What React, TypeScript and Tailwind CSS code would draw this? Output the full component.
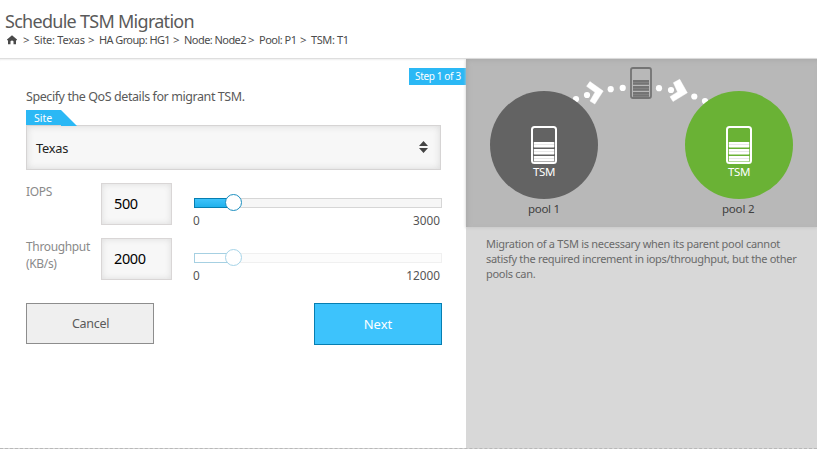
import type { ReactNode } from "react";

function ServerIcon({ x, y }: { x: number; y: number }) {
  return (
    <g transform={`translate(${x} ${y})`}>
      <rect x="1" y="1" width="24" height="36" rx="2.5" fill="none" stroke="#fff" strokeWidth="2" />
      {[16, 23, 30].map((top) => (
        <g key={top}>
          <rect x="2.8" y={top} width="20.5" height="5.4" rx="0.6" fill="#fff" />
          <rect x="2.8" y={top + 2} width="20.5" height="1" fill="#000" opacity="0.09" />
        </g>
      ))}
    </g>
  );
}

const dots = [
  [110, 40], [121, 36], [144.7, 30.2], [156.7, 28.9],
  [193, 29.2], [205, 31], [228.3, 37.5], [239, 42],
];

function MigrationDiagram() {
  return (
    <svg className="block h-[168px] w-[351px]" viewBox="0 0 351 168" fontFamily="'Noto Sans', 'Open Sans', sans-serif">
      {dots.map(([cx, cy]) => (
        <circle key={cx} cx={cx} cy={cy} r="3.1" fill="#fff" />
      ))}
      <g fill="#fff" stroke="#fff" strokeWidth="0.5">
        <path d="M123.9 22.6 137.2 32 128.8 45 124 42 129 33.3 120.6 27.3Z" />
        <path d="M213.7 20.3 221.3 33.8 207 42.5 204 37.7 211.6 33 207.4 23.7Z" />
      </g>
      <rect x="165" y="9" width="20" height="30" rx="2" fill="none" stroke="#747474" strokeWidth="1.8" />
      {[21, 27, 33].map((top) => (
        <g key={top}>
          <rect x="167" y={top} width="16" height="4.8" fill="#747474" />
          <rect x="167" y={top + 2} width="16" height="0.8" fill="#868686" />
        </g>
      ))}
      <circle cx="78" cy="86" r="54" fill="#636363" />
      <circle cx="273" cy="86" r="54" fill="#6ab235" />
      <ServerIcon x={65} y={67} />
      <ServerIcon x={260} y={67} />
      <g fontSize="11.5" fill="#fff">
        <text x="67" y="117" textLength="22.5">TSM</text>
        <text x="262" y="117" textLength="22.5">TSM</text>
      </g>
      <g fontSize="11.5" fill="#404040">
        <text x="62" y="154" textLength="32">pool 1</text>
        <text x="256" y="154" textLength="32.5">pool 2</text>
      </g>
    </svg>
  );
}

function ValueBox({ children }: { children: ReactNode }) {
  return (
    <div className="h-[42px] w-[71px] border border-[#d9d6d6] bg-[#f7f7f7] pl-3 text-[14.5px] leading-[39px] tracking-[-0.4px] text-black shadow-[inset_0_0_6px_#dcdcdc]">
      {children}
    </div>
  );
}

function Slider({ max, disabled }: { max: string; disabled?: boolean }) {
  return (
    <div className="w-[248px] pt-[15px]">
      <div className={`relative h-[10px] border ${disabled ? "border-[#f0f0f0] bg-[#fcfcfc]" : "border-[#d6d6d6] bg-[#f6f6f6]"}`}>
        <div className={`absolute -top-px -left-px h-[10px] w-10 border ${disabled ? "border-[#a6d0e2] bg-white" : "border-[#067eb1] bg-linear-to-b from-[#3dc3fb] to-[#1fb1ec]"}`} />
        <div className={`absolute -top-[5px] left-[30px] size-[17px] rounded-full border bg-white ${disabled ? "border-[#a6d4e8]" : "border-[#1d8fc0]"}`} />
      </div>
      <div className="mt-1 flex justify-between pr-[2px] text-[11.8px] leading-4 text-[#555]">
        <span className="-ml-px">0</span>
        <span>{max}</span>
      </div>
    </div>
  );
}

const crumbs = [
  { label: "Site: Texas", box: "w-[50px] tracking-[-0.25px]" },
  { label: "HA Group: HG1", box: "w-[70px] tracking-[-0.6px]" },
  { label: "Node: Node2", box: "w-[60px] tracking-[-0.55px]" },
  { label: "Pool: P1", box: "w-[37px] tracking-[-0.5px]" },
  { label: "TSM: T1", box: "w-[38px] tracking-[-0.4px]" },
];

export default function App() {
  return (
    <div className="flex h-[449px] w-[817px] flex-col overflow-hidden bg-white font-['Noto_Sans','Open_Sans',sans-serif] text-[#555]">
      <header className="h-[58px] shrink-0 pt-[10px] pl-[5px]">
        <h1 className="h-[23px] text-[18px] leading-[23px] font-normal tracking-[-0.72px] whitespace-nowrap text-[#5a5a5a]">Schedule TSM Migration</h1>
        <nav className="flex h-[14px] items-center text-[11px] leading-[14px] whitespace-nowrap text-[#4c4c4c]">
          <svg className="mr-[6px] ml-[2px] size-[10px] shrink-0" viewBox="0 0 10 10" fill="#4a4a4a">
            <path d="M5 0.2 10 4.4V5.2H9V9.3H6.5V6.3Q5 4.7 3.5 6.3V9.3H1V5.2H0V4.4Z" />
          </svg>
          {crumbs.map(({ label, box }) => (
            <span key={label} className="flex items-center">
              <span className="w-[11px] text-[11.5px]">&gt;</span>
              <span className={`mr-[4px] ${box}`}>{label}</span>
            </span>
          ))}
        </nav>
      </header>
      <div className="flex h-[390px] shrink-0 border-t border-[#dedede]">
        <main className="w-[466px] shadow-[inset_0_2px_2px_-1px_#eee]">
          <div className="flex justify-end pt-[9px]">
            <span className="h-[17px] w-[57px] bg-[#2bb8f5] pl-[6px] text-[10px] leading-[17px] tracking-[-0.35px] whitespace-nowrap text-white">Step 1 of 3</span>
          </div>
          <p className="ml-[26px] h-[25px] pt-[3px] text-[12.5px] leading-[18px] tracking-[-0.42px] whitespace-nowrap text-[#5a5a5a]">Specify the QoS details for migrant TSM.</p>
          <div className="ml-[26px] flex h-[15px]">
            <span className="h-[15px] w-[35px] bg-[#2bb8f5] pl-2 text-[10.5px] leading-[17px] text-white">Site</span>
            <svg className="h-4 w-4" viewBox="0 0 16 16"><path d="M0 0 16 16H0Z" fill="#2bb8f5" /></svg>
          </div>
          <div className="ml-[26px] flex h-[45px] w-[415px] items-center justify-between border border-[#d6d4d4] bg-[#f7f7f7] pr-3 pl-[9px] text-[12.8px] text-[#222] shadow-[inset_0_0_7px_#d8d8d8]">
            <span className="pt-[3px] tracking-[-0.2px]">Texas</span>
            <svg className="mb-0.5 h-3 w-[9px]" viewBox="0 0 9 12" fill="#444"><path d="M0 5 4.5 0 9 5ZM0 7H9L4.5 12Z" /></svg>
          </div>
          <div className="mt-[13px] ml-[26px] flex h-[55px]">
            <div className="w-[75px] text-[12px] leading-[17px] tracking-[-0.3px] text-[#8a8a8a]">IOPS</div>
            <ValueBox>500</ValueBox>
            <div className="ml-[22px]"><Slider max="3000" /></div>
          </div>
          <div className="ml-[26px] flex h-[65px]">
            <div className="w-[75px] text-[12px] leading-[17px] tracking-[-0.35px] text-[#8a8a8a]">Throughput<br />(KB/s)</div>
            <ValueBox>2000</ValueBox>
            <div className="ml-[22px]"><Slider max="12000" disabled /></div>
          </div>
          <div className="ml-[26px] flex w-[416px] justify-between">
            <button className="h-[41px] w-32 border border-[#8d8d8d] bg-[#efefef] pt-[2px] pl-px text-[12.5px] tracking-[-0.3px] text-[#5a5a5a]">Cancel</button>
            <button className="h-[42px] w-32 border border-[#067eb1] bg-[#3dc3fc] pt-px text-[13px] text-white">Next</button>
          </div>
        </main>
        <aside className="w-[351px] bg-[#d8d8d8]">
          <div className="h-[168px] bg-[#b8b8b8] shadow-[inset_2px_2px_5px_-1px_#a8a8a8,0_1px_3px_#c8c8c8]">
            <MigrationDiagram />
          </div>
          <p className="pt-[9px] pl-5 text-[11px] leading-[15px] whitespace-nowrap text-[#6a6a6a]">
            <span className="tracking-[-0.28px]">Migration of a TSM is necessary when its parent pool cannot</span><br />
            <span className="tracking-[-0.31px]">satisfy the required increment in iops/throughput, but the other</span><br />
            <span className="tracking-[-0.28px]">pools can.</span>
          </p>
        </aside>
      </div>
      <div className="h-px border-t border-dashed border-[#b8b8b8] bg-[#d4d4d4]" />
    </div>
  );
}
